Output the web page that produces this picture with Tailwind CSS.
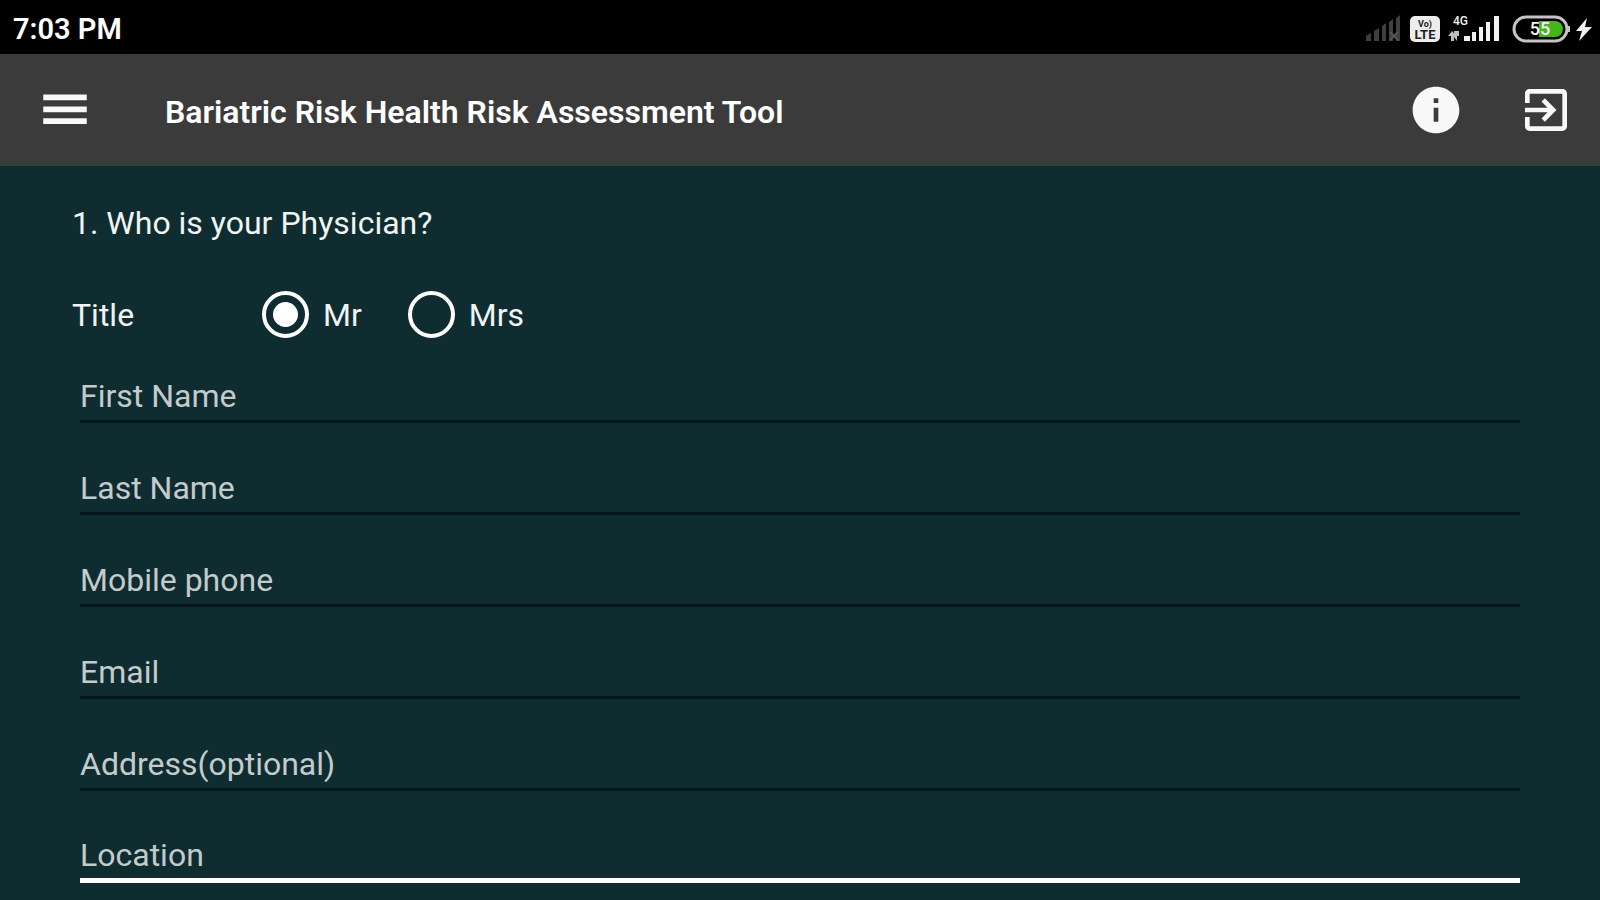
<!DOCTYPE html>
<html lang="en">
<head>
    <meta charset="UTF-8">
    <meta name="viewport" content="width=device-width, initial-scale=1.0">
    <title>Bariatric Risk Health Risk Assessment Tool</title>
    <script src="https://cdn.jsdelivr.net/npm/@tailwindcss/browser@4"></script>
</head>
<body class="flex flex-col min-h-screen bg-[#0f2d30] text-[#f0f4f4] text-[32px] leading-10 font-['Roboto',sans-serif]">
    <!-- Status bar -->
    <div class="flex items-center justify-between h-[54px] pl-[13px] pr-2 pt-1 bg-black text-white">
        <span class="text-[29px] font-semibold">7:03 PM</span>
        <div class="flex items-center">
            <svg class="w-[34px] h-7 mr-[10px]" viewBox="0 0 34 28" fill="#3f3f3f">
                <path d="M0 21l5-3v8H0zM8 16l5-3v13H8zM16 11l4-3v18h-4zM23 7l4-3v22h-4zM30 3l4-3v26h-4z"/>
                <path d="M24 17l8 8M32 17l-8 8" stroke="#565656" stroke-width="2"/>
            </svg>
            <svg class="w-[30px] h-7 mr-2" viewBox="0 0 30 28">
                <rect x="0" y="1" width="30" height="26" rx="5" fill="#ededed"/>
                <text x="15" y="12" text-anchor="middle" font-size="9" font-weight="700" fill="#222">Vo)</text>
                <text x="15" y="24" text-anchor="middle" font-size="13" font-weight="700" fill="#222">LTE</text>
            </svg>
            <svg class="w-[52px] h-7 mr-3 overflow-visible" viewBox="0 0 52 28" fill="#f2f2f2">
                <text x="5" y="10" font-size="12" font-weight="500">4G</text>
                <path d="M0 21l4-5 4 5H6v5H3v-5zM6 16h5v5h-2v5l-3-4z" fill="#bdbdbd"/>
                <rect x="16" y="21" width="6" height="5"/>
                <rect x="24" y="17" width="4" height="9"/>
                <rect x="31" y="12" width="4" height="14"/>
                <rect x="38" y="7" width="4" height="19"/>
                <rect x="46" y="1" width="5" height="25"/>
            </svg>
            <svg class="w-[58px] h-7 mr-[6px]" viewBox="0 0 58 28">
                <rect x="2" y="2" width="53" height="24" rx="12" fill="#000" stroke="#c4c4c4" stroke-width="3"/>
                <path d="M27 6h16a8 8 0 0 1 0 16H27z" fill="#44b51c"/>
                <path d="M57 11v6" stroke="#c4c4c4" stroke-width="2"/>
                <text x="28" y="20" text-anchor="middle" font-size="18" font-weight="500" fill="#f4f4f4">55</text>
            </svg>
            <svg class="w-4 h-7" viewBox="0 0 16 28" fill="#f2f2f2">
                <path d="M11 3L0 16h6L3 26 16 12H9z"/>
            </svg>
        </div>
    </div>

    <!-- App bar -->
    <header class="flex items-center h-28 pl-9 pr-[26px] bg-[#3b3b3b] text-white">
        <button type="button" aria-label="Menu">
            <svg class="w-[58px] h-[58px]" viewBox="0 0 24 24" fill="#f8f8f8"><path d="M3 17.8h18v-2.4H3v2.4zm0-4.9h18v-2.4H3v2.4zm0-7.3V8h18V5.6H3z"/></svg>
        </button>
        <h1 class="flex-1 pl-[71px] pt-1 font-semibold">Bariatric Risk Health Risk Assessment Tool</h1>
        <button type="button" aria-label="Information" class="mr-[54px]">
            <svg class="w-14 h-14" viewBox="0 0 24 24" fill="#f8f8f8"><path d="M12 2C6.48 2 2 6.48 2 12s4.48 10 10 10 10-4.48 10-10S17.52 2 12 2zm1 15h-2v-6h2v6zm0-8h-2V7h2v2z"/></svg>
        </button>
        <button type="button" aria-label="Exit">
            <svg class="w-14 h-14" viewBox="0 0 24 24" fill="#f8f8f8"><path d="M10.09 15.59L11.5 17l5-5-5-5-1.41 1.41L12.67 11H3v2h9.67l-2.58 2.59zM19 3H5c-1.11 0-2 .9-2 2v4h2V5h14v14H5v-4H3v4c0 1.1.89 2 2 2h14c1.1 0 2-.9 2-2V5c0-1.100-.9-2-2-2z"/></svg>
        </button>
    </header>

    <!-- Physician form -->
    <form class="flex flex-col pt-[37px] px-[72px]">
        <h2>1. Who is your Physician?</h2>
        <fieldset class="flex items-center h-12 mt-12">
            <legend class="float-left w-[190px]">Title</legend>
            <label class="flex items-center gap-[14px] mr-[46px]">
                <input type="radio" name="title" value="mr" checked class="appearance-none grid place-content-center w-[47px] h-[47px] rounded-full border-4 border-white before:w-[25px] before:h-[25px] before:rounded-full checked:before:bg-white">
                Mr
            </label>
            <label class="flex items-center gap-[14px]">
                <input type="radio" name="title" value="mrs" class="appearance-none grid place-content-center w-[47px] h-[47px] rounded-full border-4 border-white before:w-[25px] before:h-[25px] before:rounded-full checked:before:bg-white">
                Mrs
            </label>
        </fieldset>
        <div class="flex flex-col gap-10 mt-8 px-2">
            <input type="text" name="first_name" aria-label="First Name" placeholder="First Name" class="h-[52px] border-b-3 border-[#06171b] outline-none placeholder:text-[#c3cbcc]">
            <input type="text" name="last_name" aria-label="Last Name" placeholder="Last Name" class="h-[52px] border-b-3 border-[#06171b] outline-none placeholder:text-[#c3cbcc]">
            <input type="tel" name="phone" aria-label="Mobile phone" placeholder="Mobile phone" class="h-[52px] border-b-3 border-[#06171b] outline-none placeholder:text-[#c3cbcc]">
            <input type="email" name="email" aria-label="Email" placeholder="Email" class="h-[52px] border-b-3 border-[#06171b] outline-none placeholder:text-[#c3cbcc]">
            <input type="text" name="address" aria-label="Address(optional)" placeholder="Address(optional)" class="h-[52px] border-b-3 border-[#06171b] outline-none placeholder:text-[#c3cbcc]">
            <input type="text" name="location" aria-label="Location" placeholder="Location" class="h-[52px] border-b-5 border-white outline-none placeholder:text-[#c3cbcc]">
        </div>
    </form>
</body>
</html>
